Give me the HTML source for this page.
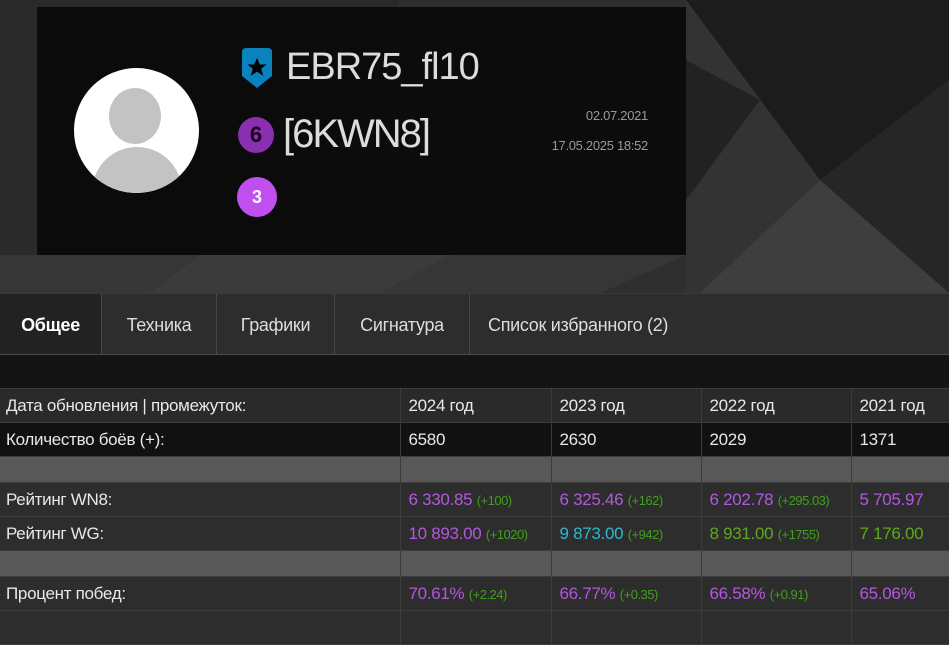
<!DOCTYPE html>
<html><head><meta charset="utf-8"><style>
body{margin:0;width:949px;height:615px;overflow:hidden;background:#141414;font-family:"Liberation Sans",sans-serif;color:#e8e8e8;position:relative}
.bg{position:absolute;left:0;top:0}
.box{position:absolute;left:37px;top:7px;width:649px;height:248px;background:rgba(10,10,10,.96)}
.av{position:absolute;left:74px;top:68px;width:125px;height:125px;border-radius:50%;background:#fff;overflow:hidden}
.av .h{position:absolute;left:35px;top:20px;width:52px;height:56px;border-radius:50%;background:#c3c3c3}
.av .b{position:absolute;left:18px;top:79px;width:90px;height:70px;border-radius:45px 45px 0 0;background:#c3c3c3}
.name{position:absolute;left:286px;top:46px;font-size:38px;color:#dcdcdc;letter-spacing:-1px}
.clan{position:absolute;left:283px;top:112px;font-size:40px;color:#dcdcdc;letter-spacing:-2px}
.c{position:absolute;border-radius:50%;text-align:center;font-weight:bold;font-family:"Liberation Sans",sans-serif}
.d{position:absolute;right:301px;font-size:13px;color:#9a9a9a;letter-spacing:-0.3px}
.tabs{position:absolute;left:0;top:293px;width:949px;height:60px;background:#2d2d2d;border-top:1px solid #3a3a3a;border-bottom:1px solid #4a4a4a}
.tab{position:absolute;top:0;height:60px;line-height:62px;font-size:18px;text-align:center;border-right:1px solid #474747;color:#ddd;letter-spacing:-0.3px}
table{position:absolute;left:0;top:388px;border-collapse:collapse;width:949px;font-size:17px;table-layout:fixed;letter-spacing:-0.3px}
td{height:33px;padding:0 0 0 6px;border:1px solid #3c3c3c;border-left:none;white-space:nowrap;overflow:hidden}
tr.a td{background:#2a2a2a}
tr.k td{background:#111}
tr.s td{background:#585858;height:25px}
tr.r td{background:#2d2d2d}
td+td{padding-left:8px}
.p{color:#b357e0}.g{color:#3fa01e;font-size:13px;letter-spacing:-0.5px}.t{color:#2fb8d0}.l{color:#5ea81e}
</style></head><body>
<svg class="bg" width="949" height="293">
<rect width="949" height="293" fill="#2f2f2f"/>
<polygon points="0,0 400,0 300,293 0,293" fill="#2a2a2a"/>
<polygon points="686,0 949,0 949,80 820,180" fill="#1c1c1c"/>
<polygon points="686,0 820,180 700,293 686,293" fill="#333"/>
<polygon points="820,180 949,80 949,293" fill="#262626"/>
<polygon points="820,180 949,293 700,293" fill="#3e3e3e"/>
<polygon points="686,60 760,100 686,200" fill="#222"/>
<polygon points="0,255 686,255 600,293 0,293" fill="#363636"/>
<polygon points="200,255 450,255 380,293 150,293" fill="#3b3b3b"/>
</svg>
<div class="box"></div>
<div class="av"><div class="h"></div><div class="b"></div></div>
<svg style="position:absolute;left:242px;top:48px" width="30" height="40" viewBox="0 0 30 40"><path d="M4 0H26Q30 0 30 4V28L15 40L0 28V4Q0 0 4 0Z" fill="#0a82bd"/><path d="M15 10l2.8 6.5h6.7l-5.3 4.3 2 7-6.2-4.2-6.2 4.2 2-7-5.3-4.3h6.7z" fill="#000"/></svg>
<div class="name">EBR75_fl10</div>
<div class="c" style="left:238px;top:117px;width:36px;height:36px;line-height:36px;background:#8a2fb0;color:#1a001f;font-size:22px">6</div>
<div class="clan">[6KWN8]</div>
<div class="c" style="left:237px;top:177px;width:40px;height:40px;line-height:40px;background:#c14ff0;color:#fff;font-size:18px">3</div>
<div class="d" style="top:108px">02.07.2021</div>
<div class="d" style="top:138px">17.05.2025 18:52</div>
<div class="tabs">
<div class="tab" style="left:0;width:101px;background:#222;font-weight:bold;color:#fff">Общее</div>
<div class="tab" style="left:102px;width:114px">Техника</div>
<div class="tab" style="left:217px;width:117px">Графики</div>
<div class="tab" style="left:335px;width:134px">Сигнатура</div>
<div class="tab" style="left:470px;width:250px;border-right:none;text-align:left;padding-left:18px">Список избранного (2)</div>
</div>
<table>
<colgroup><col style="width:400px"><col style="width:151px"><col style="width:150px"><col style="width:150px"><col style="width:98px"></colgroup>
<tr class="a"><td>Дата обновления | промежуток:</td><td>2024 год</td><td>2023 год</td><td>2022 год</td><td>2021 год</td></tr>
<tr class="k"><td>Количество боёв (+):</td><td>6580</td><td>2630</td><td>2029</td><td>1371</td></tr>
<tr class="s"><td></td><td></td><td></td><td></td><td></td></tr>
<tr class="r"><td>Рейтинг WN8:</td><td><span class="p">6 330.85</span> <span class="g">(+100)</span></td><td><span class="p">6 325.46</span> <span class="g">(+162)</span></td><td><span class="p">6 202.78</span> <span class="g">(+295.03)</span></td><td><span class="p">5 705.97</span></td></tr>
<tr class="r"><td>Рейтинг WG:</td><td><span class="p">10 893.00</span> <span class="g">(+1020)</span></td><td><span class="t">9 873.00</span> <span class="g">(+942)</span></td><td><span class="l">8 931.00</span> <span class="g">(+1755)</span></td><td><span class="l">7 176.00</span></td></tr>
<tr class="s"><td></td><td></td><td></td><td></td><td></td></tr>
<tr class="r"><td>Процент побед:</td><td><span class="p">70.61%</span> <span class="g">(+2.24)</span></td><td><span class="p">66.77%</span> <span class="g">(+0.35)</span></td><td><span class="p">66.58%</span> <span class="g">(+0.91)</span></td><td><span class="p">65.06%</span></td></tr>
<tr class="r"><td>&nbsp;</td><td></td><td></td><td></td><td></td></tr>
</table>
</body></html>
